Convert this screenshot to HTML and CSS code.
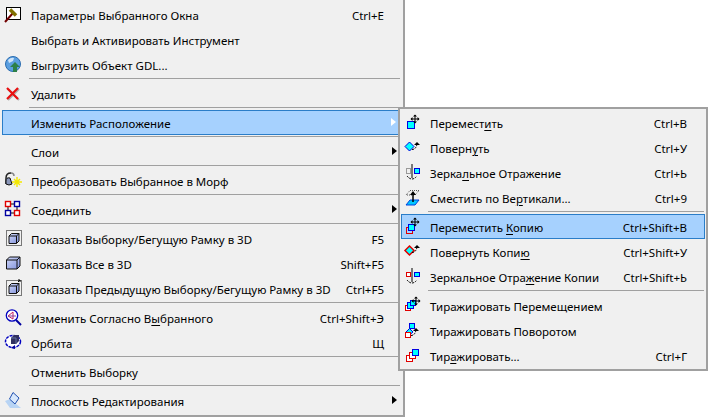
FILE: index.html
```html
<!DOCTYPE html>
<html lang="ru">
<head>
<meta charset="utf-8">
<title>Меню</title>
<link rel="stylesheet" href="styles.css">
</head>
<body>
<svg class="defs" width="0" height="0" aria-hidden="true">
  <defs>
    <linearGradient id="cube" x1="0" y1="0" x2="1" y2="1"><stop offset="0" stop-color="#d0d8f8"/><stop offset="1" stop-color="#7f90dc"/></linearGradient>
    <g id="move-arrows" fill="#000">
      <path d="M-.5-4h1v8h-1zM-4-.5h8v1h-8z"/>
      <path d="M0-4.500 2-2.500h-4zM0 4.500 2 2.500h-4zM-4.500 0-2.500-2v4zM4.500 0 2.500-2v4z"/>
    </g>
    <g id="rot-arrow">
      <path d="M0 7.500 Q4 7.500 5 2" fill="none" stroke="#000" stroke-dasharray="2 1"/>
      <path d="M5 0 8 3H2z" fill="#000"/>
    </g>
  </defs>
</svg>
<div class="menu main">
  <div class="row"><span class="ico"><svg width="20" height="20" viewBox="0 0 20 20"><rect x="3.500" y="3.500" width="14" height="12" fill="#fff" stroke="#000"/><path d="M2 18 10 9" stroke="#700000" stroke-width="2"/><path d="M7 5.500 13 11.500" stroke="#807000" stroke-width="3.500"/></svg></span><span class="lbl">Параметры Выбранного Окна</span><span class="key">Ctrl+E</span><span class="arr"></span></div>
  <div class="row"><span class="ico"></span><span class="lbl">Выбрать и Активировать Инструмент</span><span class="key"></span><span class="arr"></span></div>
  <div class="row"><span class="ico"><svg width="20" height="20" viewBox="0 0 20 20"><circle cx="10" cy="10" r="7.500" fill="#5b9fe0" stroke="#2a6cb0"/><path d="M5 6q3-3 6-2l-1 3-4 2z" fill="#cfe4f8"/><path d="M12 8 17 13H14V18H10V13H7z" fill="#2d8048"/></svg></span><span class="lbl">Выгрузить Объект GDL...</span><span class="key"></span><span class="arr"></span></div>
  <div class="sep"></div>
  <div class="row"><span class="ico"><svg width="20" height="20" viewBox="0 0 20 20"><path d="M5 6 16 17M16 6 5 17" stroke="#b0b0b0" stroke-width="2"/><path d="M4 5 15 16M15 5 4 16" stroke="#e81010" stroke-width="2.200"/></svg></span><span class="lbl">Удалить</span><span class="key"></span><span class="arr"></span></div>
  <div class="sep"></div>
  <div class="row on"><span class="ico"></span><span class="lbl">Изменить Расположение</span><span class="key"></span><span class="arr white"></span></div>
  <div class="sep"></div>
  <div class="row"><span class="ico"></span><span class="lbl">Слои</span><span class="key"></span><span class="arr black"></span></div>
  <div class="sep"></div>
  <div class="row"><span class="ico"><svg width="20" height="20" viewBox="0 0 20 20"><path d="M3 14V8Q3 3 8 3" fill="none" stroke="#222" stroke-width="1.500"/><path d="M8 3Q11 3 11 6" fill="none" stroke="#888" stroke-width="1.500"/><path d="M3 11Q3 7 7 8L9 14Q6 16 3 14z" fill="#8a96b8" stroke="#111"/><path d="M14 7V17M9 12H19M11 9 17 15M17 9 11 15" stroke="#f4e800" stroke-width="1.400"/></svg></span><span class="lbl">Преобразовать Выбранное в Морф</span><span class="key"></span><span class="arr"></span></div>
  <div class="sep"></div>
  <div class="row"><span class="ico"><svg width="20" height="20" viewBox="0 0 20 20"><path d="M5 5H14M5 5V14M14 5V14M5 14H14" stroke="#000"/><rect x="2.500" y="2.500" width="5" height="5" fill="#fff" stroke="#e00000" stroke-width="1.400"/><rect x="11.500" y="2.500" width="5" height="5" fill="#fff" stroke="#0000a0" stroke-width="1.400"/><rect x="2.500" y="11.500" width="5" height="5" fill="#fff" stroke="#0000a0" stroke-width="1.400"/><rect x="11.500" y="11.500" width="5" height="5" fill="#fff" stroke="#e00000" stroke-width="1.400"/></svg></span><span class="lbl">Соединить</span><span class="key"></span><span class="arr black"></span></div>
  <div class="sep"></div>
  <div class="row"><span class="ico"><svg width="20" height="20" viewBox="0 0 20 20"><rect x="3.500" y="2.500" width="15" height="15" fill="none" stroke="#000" stroke-dasharray="1 1"/><path d="M6 8 8.500 5.500H16V13L13.500 15.500H6z" fill="url(#cube)" stroke="#111"/><path d="M6 8H13.500V15.500M13.500 8 16 5.500" fill="none" stroke="#111"/></svg></span><span class="lbl">Показать Выборку/Бегущую Рамку в 3D</span><span class="key">F5</span><span class="arr"></span></div>
  <div class="row"><span class="ico"><svg width="20" height="20" viewBox="0 0 20 20"><path d="M3.500 7 6.500 4H17V13L14 16H3.500z" fill="url(#cube)" stroke="#111"/><path d="M3.500 7H14V16M14 7 17 4" fill="none" stroke="#111"/></svg></span><span class="lbl">Показать Все в 3D</span><span class="key">Shift+F5</span><span class="arr"></span></div>
  <div class="row"><span class="ico"><svg width="20" height="20" viewBox="0 0 20 20"><rect x="3.500" y="2.500" width="15" height="15" fill="none" stroke="#000" stroke-dasharray="1 1"/><path d="M6 8 8.500 5.500H16V13L13.500 15.500H6z" fill="url(#cube)" stroke="#111"/><path d="M6 8H13.500V15.500M13.500 8 16 5.500" fill="none" stroke="#111"/><path d="M15 4 17 2M15 2H17V4" fill="none" stroke="#000"/></svg></span><span class="lbl">Показать Предыдущую Выборку/Бегущую Рамку в 3D</span><span class="key">Ctrl+F5</span><span class="arr"></span></div>
  <div class="sep"></div>
  <div class="row"><span class="ico"><svg width="20" height="20" viewBox="0 0 20 20"><circle cx="9" cy="8.500" r="5.700" fill="#fff" stroke="#0000c0" stroke-width="1.300"/><path d="M5 9 10 5V12z" fill="none" stroke="#c02060"/><path d="M5 9H13" stroke="#8040a0"/><path d="M13 13 18 18" stroke="#0000a0" stroke-width="2"/></svg></span><span class="lbl">Изменить Согласно В<u>ы</u>бранного</span><span class="key">Ctrl+Shift+Э</span><span class="arr"></span></div>
  <div class="row"><span class="ico"><svg width="20" height="20" viewBox="0 0 20 20"><ellipse cx="10" cy="9.500" rx="7.500" ry="6" fill="#fff" stroke="#0000c0" stroke-width="1.500" stroke-dasharray="3 1"/><path d="M8 6 11 3H16V9L13 12H8z" fill="#303060"/><path d="M8 6H13V12" fill="none" stroke="#6070a0"/><path d="M8 16 12 13V17z" fill="#0000a0"/></svg></span><span class="lbl">Орбита</span><span class="key">Щ</span><span class="arr"></span></div>
  <div class="sep"></div>
  <div class="row"><span class="ico"></span><span class="lbl">Отменить Выборку</span><span class="key"></span><span class="arr"></span></div>
  <div class="sep"></div>
  <div class="row"><span class="ico"><svg width="20" height="20" viewBox="0 0 20 20"><path d="M2 11 7 9 18 18H7z" fill="#b8d4f4"/><path d="M10 2.500 16 8 12 14 6.500 9z" fill="#d8e8fc" stroke="#2050b0"/></svg></span><span class="lbl">Плоскость Редактирования</span><span class="key"></span><span class="arr black"></span></div>
</div>
<div class="menu sub">
  <div class="row"><span class="ico"><svg width="20" height="20" viewBox="0 0 20 20"><rect x="5.500" y="9.500" width="7" height="7" fill="#00ffff" stroke="#0000e0"/><use href="#move-arrows" x="13" y="7"/></svg></span><span class="lbl">Перемест<u>и</u>ть</span><span class="key">Ctrl+B</span><span class="arr"></span></div>
  <div class="row"><span class="ico"><svg width="20" height="20" viewBox="0 0 20 20"><path d="M7.500 5 12 9.500 7.500 14 3 9.500z" fill="#00ffff" stroke="#0000e0"/><use href="#rot-arrow" x="10" y="5"/></svg></span><span class="lbl">Поверн<u>у</u>ть</span><span class="key">Ctrl+У</span><span class="arr"></span></div>
  <div class="row"><span class="ico"><svg width="20" height="20" viewBox="0 0 20 20"><path d="M10 2V16" stroke="#000"/><path d="M5 14Q10 20 15 14" fill="none" stroke="#000" stroke-dasharray="2 1"/><rect x="4.500" y="6.500" width="4" height="5" fill="none" stroke="#444" stroke-dasharray="1 1"/><rect x="12.500" y="6.500" width="5" height="5" fill="#00ffff" stroke="#0000e0"/></svg></span><span class="lbl">Зерка<u>л</u>ьное Отражение</span><span class="key">Ctrl+Ь</span><span class="arr"></span></div>
  <div class="row"><span class="ico"><svg width="20" height="20" viewBox="0 0 20 20"><path d="M8 3.500H17L13 8H4z" fill="none" stroke="#555" stroke-dasharray="1 1"/><path d="M8 13H17L13 18H4z" fill="#00c8ff" stroke="#0040e0"/><path d="M11 6V15" stroke="#000" stroke-width="1.500"/><path d="M11 4 14 8H8z" fill="#000"/></svg></span><span class="lbl">Сместить по Ве<u>р</u>тикали...</span><span class="key">Ctrl+9</span><span class="arr"></span></div>
  <div class="sep"></div>
  <div class="row on"><span class="ico"><svg width="20" height="20" viewBox="0 0 20 20"><rect x="4.500" y="11.500" width="6" height="6" fill="none" stroke="#e00000"/><rect x="6.500" y="8.500" width="6" height="6" fill="#00ffff" stroke="#0000e0"/><use href="#move-arrows" x="13" y="6"/></svg></span><span class="lbl">Переместить <u>К</u>опию</span><span class="key">Ctrl+Shift+B</span><span class="arr"></span></div>
  <div class="row"><span class="ico"><svg width="20" height="20" viewBox="0 0 20 20"><path d="M7.500 5 12 9.500 7.500 14 3 9.500z" fill="#00ffff" stroke="#e00000" stroke-width="1.500"/><use href="#rot-arrow" x="10" y="4"/></svg></span><span class="lbl">Повернуть Копи<u>ю</u></span><span class="key">Ctrl+Shift+У</span><span class="arr"></span></div>
  <div class="row"><span class="ico"><svg width="20" height="20" viewBox="0 0 20 20"><path d="M10 2V16" stroke="#000"/><path d="M5 14Q10 20 15 14" fill="none" stroke="#000" stroke-dasharray="2 1"/><rect x="4.500" y="6.500" width="4" height="4" fill="#fff" stroke="#e00000"/><rect x="12.500" y="6.500" width="5" height="4" fill="#00ffff" stroke="#0000e0"/></svg></span><span class="lbl">Зеркальное Отра<u>ж</u>ение Копии</span><span class="key">Ctrl+Shift+Ь</span><span class="arr"></span></div>
  <div class="sep"></div>
  <div class="row"><span class="ico"><svg width="20" height="20" viewBox="0 0 20 20"><rect x="3.500" y="10.500" width="5" height="5" fill="#fff" stroke="#e00000"/><rect x="5.500" y="7.500" width="6" height="6" fill="#00ffff" stroke="#0000e0"/><rect x="8.500" y="5.500" width="5" height="5" fill="#00ffff" stroke="#0000e0"/><use href="#move-arrows" x="14" y="6"/></svg></span><span class="lbl">Тиражировать Перемещением</span><span class="key"></span><span class="arr"></span></div>
  <div class="row"><span class="ico"><svg width="20" height="20" viewBox="0 0 20 20"><rect x="7.500" y="3.500" width="5" height="5" fill="#00ffff" stroke="#0000e0"/><path d="M7.500 8.500 11 12 7.500 15 4 12z" fill="#00ffff" stroke="#0000e0"/><rect x="3.500" y="12.500" width="5" height="5" fill="#fff" stroke="#e00000"/><use href="#rot-arrow" x="9" y="8"/></svg></span><span class="lbl">Тиражировать Поворотом</span><span class="key"></span><span class="arr"></span></div>
  <div class="row"><span class="ico"><svg width="20" height="20" viewBox="0 0 20 20"><rect x="4.500" y="10.500" width="6" height="6" fill="#fff" stroke="#e00000"/><rect x="7.500" y="7.500" width="6" height="6" fill="#fff" stroke="#e00000"/><rect x="10.500" y="4.500" width="6" height="6" fill="#00ffff" stroke="#0000e0"/></svg></span><span class="lbl">Тир<u>а</u>жировать...</span><span class="key">Ctrl+Г</span><span class="arr"></span></div>
</div>
</body>
</html>
```
FILE: styles.css
```css
* { box-sizing: border-box; }
html, body { margin: 0; height: 417px; overflow: hidden; background: #fff; }
body { position: relative; font: 11.5px/25px "Noto Sans", "Open Sans", sans-serif; color: #000; }
.defs { position: absolute; }
.menu { background: #f0f0f0; border-style: solid; border-color: #a0a0a0; display: flex; flex-direction: column; }
.main { width: 405px; height: 417px; border-width: 0 2px 2px 0; padding: 2px; }
.sub { position: absolute; left: 398px; top: 107px; width: 310px; border-width: 2px; padding: 1px; }
.row { display: flex; height: 25px; flex: none; white-space: nowrap; }
.row.on { background: #a6d1fe; outline: 1px solid #2a7dc8; outline-offset: -1px; }
.ico { width: 29px; flex: none; padding: 2px 0 0 1px; }
.ico svg { display: block; }
.lbl, .key { padding-top: 1px; }
.lbl { flex: 1; }
.arr { width: 17px; flex: none; position: relative; }
.sub .arr { width: 18px; }
.arr.black::after, .arr.white::after { content: ""; position: absolute; left: 8px; top: 8px; border-style: solid; border-width: 4px 0 4px 5px; border-color: transparent transparent transparent #000; }
.arr.white::after { border-left-color: #fff; left: 7px; }
.sep { height: 1px; margin: 1px 1px 2px 27px; background: #a0a0a0; flex: none; }
u { text-underline-offset: 2px; }
```
